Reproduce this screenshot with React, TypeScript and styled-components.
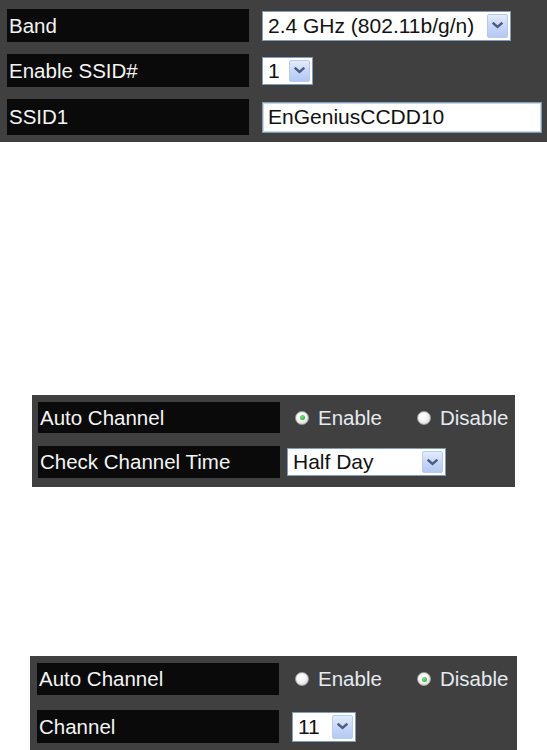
import React from "react";
import styled, { createGlobalStyle } from "styled-components";

const GlobalStyle = createGlobalStyle`
  html, body { margin: 0; padding: 0; background: #ffffff; }
  body { font-family: "Liberation Sans", Arial, sans-serif; }
  #root { display: block; }
`;

const Page = styled.div`
  display: flex;
  flex-direction: column;
  align-items: flex-start;
  width: 547px;
  height: 750px;
  overflow: hidden;
`;

const Panel = styled.section<{ $mt: number; $ml: number; $w: number; $pad: string }>`
  box-sizing: border-box;
  margin-top: ${(p) => p.$mt}px;
  margin-left: ${(p) => p.$ml}px;
  width: ${(p) => p.$w}px;
  padding: ${(p) => p.$pad};
  background: #404040;
`;

const Grid = styled.div<{ $colGap: number; $rowGap: number; $rows: string }>`
  display: grid;
  grid-template-columns: 242px 1fr;
  grid-template-rows: ${(p) => p.$rows};
  column-gap: ${(p) => p.$colGap}px;
  row-gap: ${(p) => p.$rowGap}px;
  align-items: center;
`;

const Label = styled.div`
  align-self: stretch;
  display: flex;
  align-items: center;
  padding-left: 2px;
  background: #0a0a0a;
  color: #f4f4f4;
  font-size: 20.5px;
  white-space: nowrap;
`;

const Value = styled.div<{ $pl?: number }>`
  display: flex;
  align-items: center;
  padding-left: ${(p) => p.$pl ?? 0}px;
`;

const SelectBox = styled.div<{ $w: number; $h: number }>`
  box-sizing: border-box;
  width: ${(p) => p.$w}px;
  height: ${(p) => p.$h}px;
  display: flex;
  align-items: center;
  justify-content: space-between;
  background: #ffffff;
  border: 1px solid #7f9db9;
  padding: 2px 2px 2px 5px;
  color: #111111;
  font-size: 21px;
  white-space: nowrap;
`;

const DropButton = styled.span`
  box-sizing: border-box;
  width: 21px;
  align-self: stretch;
  display: flex;
  align-items: center;
  justify-content: center;
  border: 1px solid #b8caf2;
  border-radius: 2px;
  background: linear-gradient(#e3ebfd, #c3d4f8 60%, #b5c9f4);
`;

const TextInput = styled.input`
  box-sizing: border-box;
  width: 280px;
  height: 31px;
  border: 1px solid #7f9db9;
  box-shadow: inset 0 0 0 1px #c9d6e4;
  padding: 0 0 0 5px;
  margin: 0;
  background: #ffffff;
  color: #111111;
  font-family: "Liberation Sans", Arial, sans-serif;
  font-size: 21px;
  outline: none;
`;

const RadioGroup = styled.div`
  display: flex;
  align-items: center;
`;

const RadioOption = styled.label<{ $w: number }>`
  display: flex;
  align-items: center;
  width: ${(p) => p.$w}px;
  gap: 9px;
  color: #e6ebf1;
  font-size: 20.5px;
  white-space: nowrap;
`;

const RadioDot = styled.span<{ $on: boolean }>`
  box-sizing: border-box;
  position: relative;
  width: 14px;
  height: 14px;
  border-radius: 50%;
  border: 1px solid #a0a0a0;
  background: radial-gradient(circle at 40% 35%, #ffffff 0%, #f4f4f4 45%, #cdcdcd 100%);
  flex: none;
  &::after {
    content: "";
    display: ${(p) => (p.$on ? "block" : "none")};
    position: absolute;
    left: 3.5px;
    top: 3.5px;
    width: 5px;
    height: 5px;
    border-radius: 50%;
    background: radial-gradient(circle at 40% 35%, #7ee07e, #1fa41f);
  }
`;

const Chevron = () => (
  <svg width="11" height="7" viewBox="0 0 11 7">
    <polyline points="1.5,1.5 5.5,5 9.5,1.5" fill="none" stroke="#4a5d80" strokeWidth="2.4" strokeLinecap="square" />
  </svg>
);

const Select = ({ value, w, h }: { value: string; w: number; h: number }) => (
  <SelectBox $w={w} $h={h}>
    <span>{value}</span>
    <DropButton>
      <Chevron />
    </DropButton>
  </SelectBox>
);

const Radios = ({ on }: { on: "enable" | "disable" }) => (
  <RadioGroup>
    <RadioOption $w={122}>
      <RadioDot $on={on === "enable"} />
      Enable
    </RadioOption>
    <RadioOption $w={100}>
      <RadioDot $on={on === "disable"} />
      Disable
    </RadioOption>
  </RadioGroup>
);

export default function App() {
  return (
    <>
      <GlobalStyle />
      <Page>
        <Panel $mt={0} $ml={0} $w={547} $pad="9px 0 7px 7px">
          <Grid $colGap={13} $rowGap={12} $rows="33px 33px 36px">
            <Label>Band</Label>
            <Value>
              <Select value="2.4 GHz (802.11b/g/n)" w={249} h={30} />
            </Value>
            <Label>Enable SSID#</Label>
            <Value>
              <Select value="1" w={51} h={28} />
            </Value>
            <Label>SSID1</Label>
            <Value>
              <TextInput defaultValue="EnGeniusCCDD10" readOnly />
            </Value>
          </Grid>
        </Panel>

        <Panel $mt={253} $ml={32} $w={483} $pad="7px 0 9px 6px">
          <Grid $colGap={7} $rowGap={13} $rows="31px 32px">
            <Label>Auto Channel</Label>
            <Value $pl={8}>
              <Radios on="enable" />
            </Value>
            <Label>Check Channel Time</Label>
            <Value>
              <Select value="Half Day" w={159} h={28} />
            </Value>
          </Grid>
        </Panel>

        <Panel $mt={169} $ml={30} $w={487} $pad="7px 0 10px 7px">
          <Grid $colGap={13} $rowGap={15} $rows="32px 33px">
            <Label>Auto Channel</Label>
            <Value $pl={3}>
              <Radios on="disable" />
            </Value>
            <Label>Channel</Label>
            <Value>
              <Select value="11" w={64} h={30} />
            </Value>
          </Grid>
        </Panel>
      </Page>
    </>
  );
}
